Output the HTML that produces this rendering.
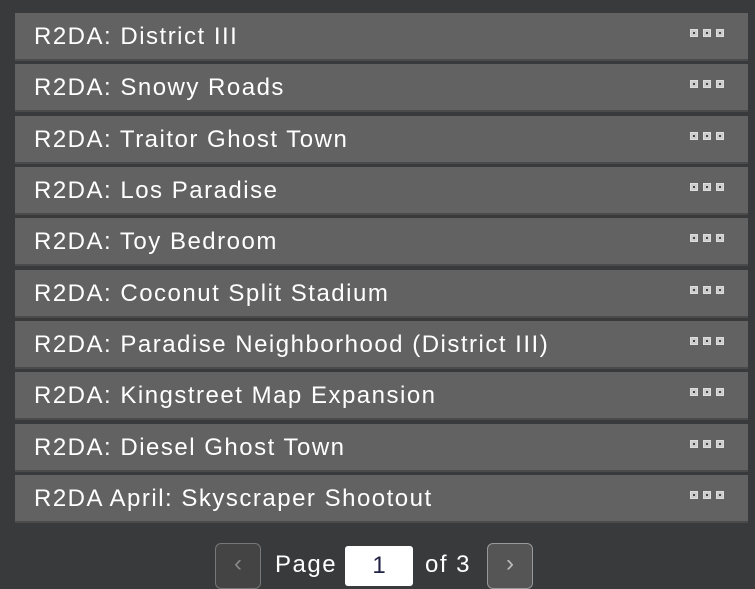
<!DOCTYPE html><html><head><style>
body{margin:0;width:755px;height:573px;background:#393a3b;overflow:hidden;font-family:"Liberation Sans",sans-serif;position:relative}
.r{position:absolute;left:15px;width:733px;height:46px;background:#626262;border-bottom:2px solid #4b4b4b;box-sizing:content-box}
.t{position:absolute;left:19px;top:10px;color:#fff;font-size:24px;letter-spacing:1.5px;white-space:nowrap}
.d{position:absolute;top:16px;width:6px;height:6px;border:1px solid #ddd;background:#aaa;box-shadow:inset 0 0 0 2px #ccc}
.d::after{content:"";position:absolute;left:2px;top:2px;width:2px;height:2px;background:#444}
.b{position:absolute;top:543px;width:44px;height:44px;border:1px solid #777;border-radius:6px;background:#444;color:#888;font-size:24px;text-align:center;line-height:40px}
.p{position:absolute;top:551px;color:#fff;font-size:24px;letter-spacing:1.5px}
</style></head><body>
<div class="r" style="top:13px"><div class="t">R2DA: District III</div><i class="d" style="left:675px"></i><i class="d" style="left:688px"></i><i class="d" style="left:701px"></i></div>
<div class="r" style="top:64px"><div class="t">R2DA: Snowy Roads</div><i class="d" style="left:675px"></i><i class="d" style="left:688px"></i><i class="d" style="left:701px"></i></div>
<div class="r" style="top:116px"><div class="t">R2DA: Traitor Ghost Town</div><i class="d" style="left:675px"></i><i class="d" style="left:688px"></i><i class="d" style="left:701px"></i></div>
<div class="r" style="top:167px"><div class="t">R2DA: Los Paradise</div><i class="d" style="left:675px"></i><i class="d" style="left:688px"></i><i class="d" style="left:701px"></i></div>
<div class="r" style="top:218px"><div class="t">R2DA: Toy Bedroom</div><i class="d" style="left:675px"></i><i class="d" style="left:688px"></i><i class="d" style="left:701px"></i></div>
<div class="r" style="top:270px"><div class="t">R2DA: Coconut Split Stadium</div><i class="d" style="left:675px"></i><i class="d" style="left:688px"></i><i class="d" style="left:701px"></i></div>
<div class="r" style="top:321px"><div class="t">R2DA: Paradise Neighborhood (District III)</div><i class="d" style="left:675px"></i><i class="d" style="left:688px"></i><i class="d" style="left:701px"></i></div>
<div class="r" style="top:372px"><div class="t">R2DA: Kingstreet Map Expansion</div><i class="d" style="left:675px"></i><i class="d" style="left:688px"></i><i class="d" style="left:701px"></i></div>
<div class="r" style="top:424px"><div class="t">R2DA: Diesel Ghost Town</div><i class="d" style="left:675px"></i><i class="d" style="left:688px"></i><i class="d" style="left:701px"></i></div>
<div class="r" style="top:475px"><div class="t">R2DA April: Skyscraper Shootout</div><i class="d" style="left:675px"></i><i class="d" style="left:688px"></i><i class="d" style="left:701px"></i></div>
<div class="b" style="left:215px">&lsaquo;</div>
<div class="p" style="left:275px">Page</div>
<div style="position:absolute;left:345px;top:546px;width:68px;height:40px;background:#fff;border-radius:3px;color:#224;font-size:24px;text-align:center;line-height:40px">1</div>
<div class="p" style="left:425px">of 3</div>
<div class="b" style="left:487px;border-color:#999;background:#555;color:#bbb">&rsaquo;</div>
</body></html>
